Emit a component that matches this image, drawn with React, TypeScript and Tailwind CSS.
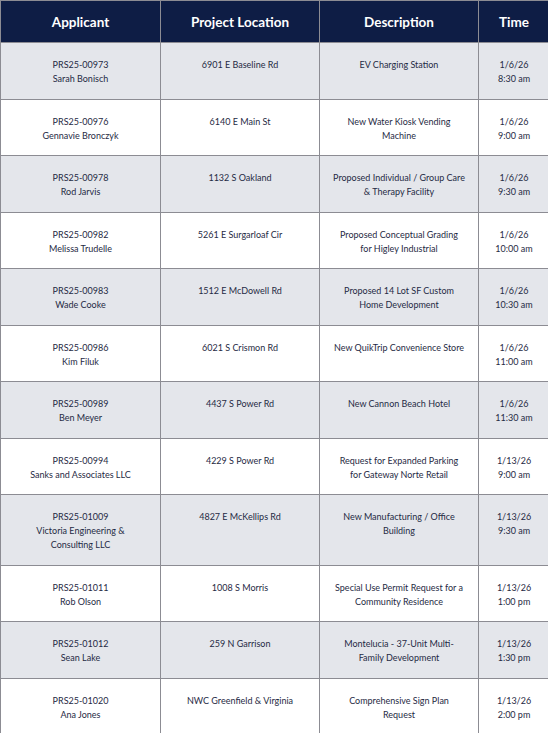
import React from 'react';

type Row = { id: string; name: string[]; location: string; desc: string[]; date: string; time: string };

const ROWS: Row[] = [
  { id: 'PRS25-00973', name: ['Sarah Bonisch'], location: '6901 E Baseline Rd', desc: ['EV Charging Station'], date: '1/6/26', time: '8:30 am' },
  { id: 'PRS25-00976', name: ['Gennavie Bronczyk'], location: '6140 E Main St', desc: ['New Water Kiosk Vending', 'Machine'], date: '1/6/26', time: '9:00 am' },
  { id: 'PRS25-00978', name: ['Rod Jarvis'], location: '1132 S Oakland', desc: ['Proposed Individual / Group Care', '& Therapy Facility'], date: '1/6/26', time: '9:30 am' },
  { id: 'PRS25-00982', name: ['Melissa Trudelle'], location: '5261 E Surgarloaf Cir', desc: ['Proposed Conceptual Grading', 'for Higley Industrial'], date: '1/6/26', time: '10:00 am' },
  { id: 'PRS25-00983', name: ['Wade Cooke'], location: '1512 E McDowell Rd', desc: ['Proposed 14 Lot SF Custom', 'Home Development'], date: '1/6/26', time: '10:30 am' },
  { id: 'PRS25-00986', name: ['Kim Filuk'], location: '6021 S Crismon Rd', desc: ['New QuikTrip Convenience Store'], date: '1/6/26', time: '11:00 am' },
  { id: 'PRS25-00989', name: ['Ben Meyer'], location: '4437 S Power Rd', desc: ['New Cannon Beach Hotel'], date: '1/6/26', time: '11:30 am' },
  { id: 'PRS25-00994', name: ['Sanks and Associates LLC'], location: '4229 S Power Rd', desc: ['Request for Expanded Parking', 'for Gateway Norte Retail'], date: '1/13/26', time: '9:00 am' },
  { id: 'PRS25-01009', name: ['Victoria Engineering &', 'Consulting LLC'], location: '4827 E McKellips Rd', desc: ['New Manufacturing / Office', 'Building'], date: '1/13/26', time: '9:30 am' },
  { id: 'PRS25-01011', name: ['Rob Olson'], location: '1008 S Morris', desc: ['Special Use Permit Request for a', 'Community Residence'], date: '1/13/26', time: '1:00 pm' },
  { id: 'PRS25-01012', name: ['Sean Lake'], location: '259 N Garrison', desc: ['Montelucia - 37-Unit Multi-', 'Family Development'], date: '1/13/26', time: '1:30 pm' },
  { id: 'PRS25-01020', name: ['Ana Jones'], location: 'NWC Greenfield & Virginia', desc: ['Comprehensive Sign Plan', 'Request'], date: '1/13/26', time: '2:00 pm' },
];

const base = 'border border-[#8c8c93] align-top text-center pt-[15px] pb-[12.5px] px-0 whitespace-nowrap';
const th = 'border border-[#8c8c93] h-[42px] align-middle text-center';

export default function App() {
  return (
    <div className="w-[548px] h-[733px] overflow-hidden bg-white font-['Lato',sans-serif] text-[#1f2a44]">
      <table className="w-[549px] table-fixed border-collapse text-[9px] leading-[14px]">
        <colgroup>
          <col className="w-[160px]" />
          <col className="w-[159px]" />
          <col className="w-[159px]" />
          <col className="w-[71px]" />
        </colgroup>
        <thead>
          <tr className="bg-[#0e1d45] text-white text-[13.5px] font-bold">
            <th className={th}>Applicant</th>
            <th className={th}>Project Location</th>
            <th className={th}>Description</th>
            <th className={th}>Time</th>
          </tr>
        </thead>
        <tbody>
          {ROWS.map((r, i) => (
            <tr key={r.id} className={i % 2 === 0 ? 'bg-[#e4e6eb]' : 'bg-white'}>
              <td className={base}>
                <div>{r.id}</div>
                {r.name.map((n) => (
                  <div key={n}>{n}</div>
                ))}
              </td>
              <td className={base}>{r.location}</td>
              <td className={base}>
                {r.desc.map((d) => (
                  <div key={d}>{d}</div>
                ))}
              </td>
              <td className={base}>
                <div>{r.date}</div>
                <div>{r.time}</div>
              </td>
            </tr>
          ))}
        </tbody>
      </table>
    </div>
  );
}
